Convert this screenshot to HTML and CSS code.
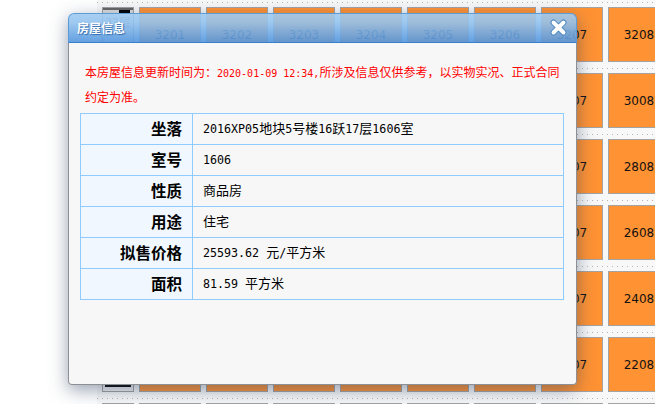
FILE: index.html
```html
<!DOCTYPE html>
<html lang="zh-CN">
<head>
<meta charset="utf-8">
<title>房屋信息</title>
<link rel="stylesheet" href="styles.css">
</head>
<body>
<main class="plan" id="plan"></main>
<section class="dialog">
  <header class="dialog-title">
    <h1>房屋信息</h1>
    <svg class="close" width="17" height="17" viewBox="0 0 17 17" aria-label="关闭">
      <path class="close-edge" d="M3.5 3.5 13.5 13.5M13.5 3.5 3.5 13.5"/>
      <path class="close-core" d="M3.5 3.5 13.5 13.5M13.5 3.5 3.5 13.5"/>
    </svg>
  </header>
  <div class="dialog-body">
    <p class="notice">本房屋信息更新时间为&#xFF1A;<span class="lat-s">2020-01-09 12:34,</span>所涉及信息仅供参考&#xFF0C;以实物实况&#x3001;正式合同约定为准&#x3002;</p>
    <table class="info">
      <tr><th>坐落</th><td><span class="lat">2016XP05</span>地块<span class="lat">5</span>号楼<span class="lat">16</span>跃<span class="lat">17</span>层<span class="lat">1606</span>室</td></tr>
      <tr><th>室号</th><td><span class="lat">1606</span></td></tr>
      <tr><th>性质</th><td>商品房</td></tr>
      <tr><th>用途</th><td>住宅</td></tr>
      <tr><th>拟售价格</th><td><span class="lat">25593.62 </span>元<span class="lat">/</span>平方米</td></tr>
      <tr><th>面积</th><td><span class="lat">81.59 </span>平方米</td></tr>
    </table>
  </div>
</section>
<script src="plan.js"></script>
</body>
</html>
```
FILE: styles.css
```css
* { box-sizing: border-box; }
html, body { margin: 0; height: 404px; overflow: hidden; background: #fff; }
body { font-family: "Noto Sans CJK SC", sans-serif; position: relative; }

.plan { margin-left: 97px; padding-top: 2px; background: #f8f8f8; height: 404px; overflow: hidden; }
.row {
  display: flex;
  gap: 5px;
  height: 66px;
  padding: 5px 0 0 5px;
  background: repeating-linear-gradient(90deg, #b4b4b4 0 1px, transparent 1px 5px) 0 0 / 100% 1px no-repeat;
}
.floor {
  flex: none;
  width: 32px;
  height: 55px;
  border: 1px solid #a0a0a0;
  background: #f2f2f2;
  display: flex;
  flex-direction: column;
  align-items: center;
  color: #888;
  font-size: 12px;
}
.floor-top { align-self: stretch; height: 5px; background: linear-gradient(#666 0 2px, #ddd 2px); display: flex; justify-content: flex-end; padding: 2px 3px 0 0; }
.floor-top i { width: 11px; height: 3px; background: #000; }
.floor-name { flex: 1; line-height: 16px; padding-top: 1px; }
.floor-line { width: 26px; height: 2px; background: #000; margin-bottom: 4px; }
.unit {
  flex: none;
  width: 62px;
  height: 55px;
  border: 1px solid #a3a3a3;
  background: #ff9233;
  color: #111;
  font: 12px/54px "DejaVu Sans", sans-serif;
  text-align: center;
}

.dialog {
  position: absolute;
  left: 68px;
  top: 13px;
  width: 509px;
  height: 372px;
  display: flex;
  flex-direction: column;
  border-radius: 6px 6px 4px 4px;
  box-shadow: 0 5px 18px rgba(50, 70, 100, .5);
}
.dialog-title {
  flex: none;
  height: 30px;
  display: flex;
  align-items: center;
  justify-content: space-between;
  padding: 0 9px 2px 8px;
  border: 1px solid #5b9bd8;
  border-bottom: 1px solid #3a80c8;
  border-radius: 6px 6px 0 0;
  background: linear-gradient(rgba(158, 202, 240, .9), rgba(146, 194, 238, .89) 30%, rgba(84, 150, 222, .9));
}
.dialog-title h1 {
  margin: 0;
  color: #fff;
  font-size: 12px;
  font-weight: 700;
  text-shadow: 1px 1px 1px #2f6cb0;
}
.close { flex: none; }
.close-edge { fill: none; stroke: #4a86c0; stroke-width: 6; stroke-linecap: round; }
.close-core { fill: none; stroke: #fff; stroke-width: 4; stroke-linecap: round; }

.dialog-body {
  flex: 1;
  background: #f7f7f7;
  border: 1px solid #8d9095;
  border-top: 0;
  border-radius: 0 0 4px 4px;
  padding: 16px 11px 0;
}
.notice {
  margin: 0 0 4px;
  padding: 0 5px;
  color: #f00;
  font-size: 12px;
  line-height: 25px;
  text-spacing-trim: space-all;
}
.lat-s { font-family: "DejaVu Sans Mono", monospace; font-size: 10px; line-height: 1; }
.lat { font-family: "DejaVu Sans Mono", monospace; font-size: 11.67px; line-height: 1; white-space: pre; }

.info { width: 484px; border-collapse: collapse; table-layout: fixed; }
.info th, .info td { height: 31px; border: 1px solid #8fcbff; padding: 0 0 2px; color: #000; }
.info th {
  width: 112px;
  background: #f0f7ff;
  text-align: right;
  padding-right: 10px;
  font-size: 15.5px;
  font-weight: 700;
}
.info td { font-size: 13px; padding: 0 0 3px 10px; }
```
FILE: plan.js
```js
var plan = document.getElementById('plan');
[32, 30, 28, 26, 24, 22, 20].forEach(function (floor) {
  var row = document.createElement('div');
  row.className = 'row';
  var named = floor !== 20;
  var html = '<div class="floor"><div class="floor-top"><i></i></div><div class="floor-name">' + (named ? (floor + 1) + '层' : '') + '</div><div class="floor-line"></div></div>';
  for (var i = 1; i <= 8; i++) {
    html += '<div class="unit">' + (named ? floor + '0' + i : '') + '</div>';
  }
  row.innerHTML = html;
  plan.appendChild(row);
});
```
